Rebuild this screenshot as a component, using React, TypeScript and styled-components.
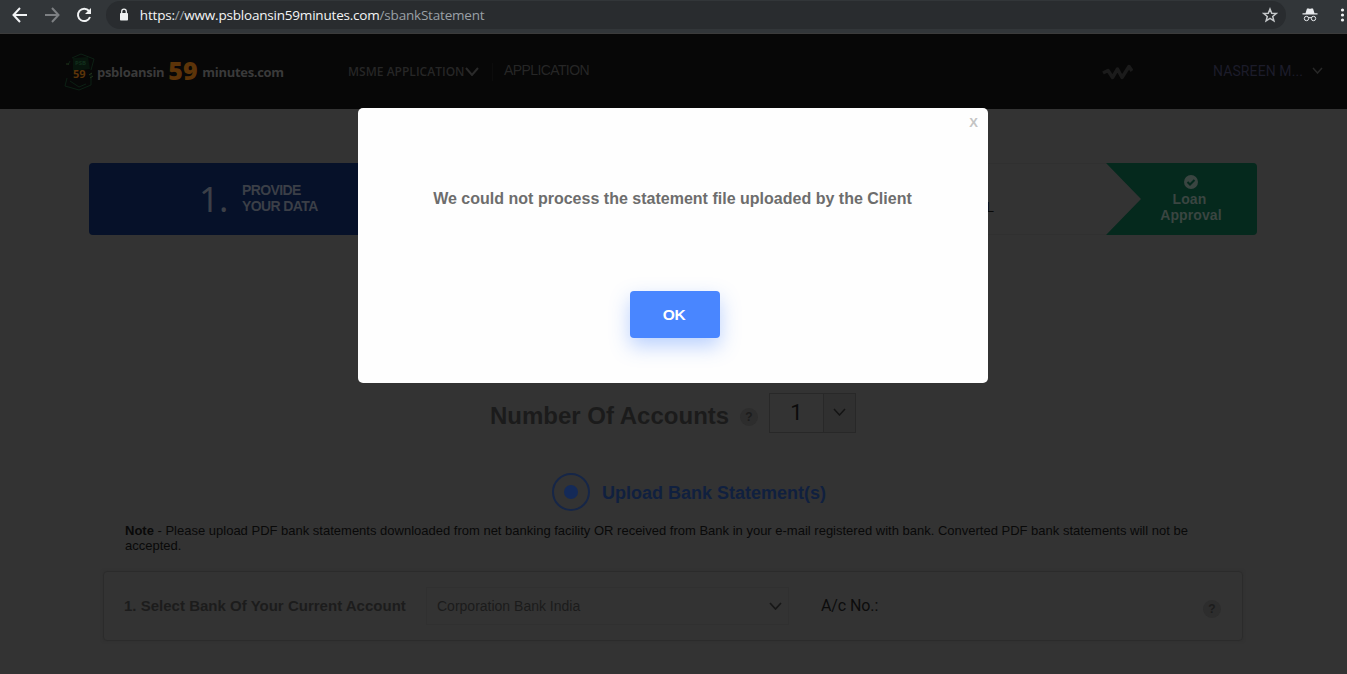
import React from 'react';
import styled, { createGlobalStyle } from 'styled-components';

const Global = createGlobalStyle`
  * { box-sizing: border-box; }
  body { margin: 0; background: #333; font-family: "Liberation Sans", Arial, sans-serif; overflow: hidden; }
  svg { display: block; flex: none; }
`;

const Screen = styled.div`
  position: relative;
  width: 1347px;
  height: 674px;
  overflow: hidden;
  background: #333333;
`;

const Toolbar = styled.div`
  display: flex;
  align-items: center;
  height: 34px;
  padding: 0 0 4px 12px;
  background: #323639;
  border-bottom: 1px solid #3b3b3b;
`;

const NavIcons = styled.div`
  display: flex;
  gap: 16px;
  width: 94px;
`;

const AddressBar = styled.div`
  display: flex;
  align-items: center;
  width: 1182px;
  height: 28px;
  padding: 0 8px 0 12px;
  border-radius: 14px;
  background: #292c2f;
`;

const Url = styled.div`
  flex: 1;
  margin-left: 10px;
  font: 13.5px/20px "Open Sans", "Noto Sans", sans-serif;
  letter-spacing: -0.2px;
  color: #f4f5f6;
  white-space: nowrap;
`;

const Faint = styled.span`
  color: #9aa0a6;
`;

const BrowserActions = styled.div`
  display: flex;
  align-items: center;
  gap: 15px;
  margin-left: 16px;
`;

const Header = styled.header`
  display: flex;
  align-items: center;
  height: 75px;
  padding: 0 24px 0 64px;
  background: #070707;
`;

const Logo = styled.div`
  display: flex;
  align-items: center;
  width: 284px;
`;

const LogoText = styled.span`
  font: 700 13px/18px "Open Sans", sans-serif;
  letter-spacing: -0.3px;
  color: #3a3a3a;
`;

const LogoNumber = styled.span`
  width: 38px;
  padding: 0 0 4px 4px;
  font: 800 25px/30px "Open Sans", sans-serif;
  color: #5c3409;
`;

const MenuItem = styled.div`
  display: flex;
  align-items: center;
  width: 145px;
  height: 18px;
  font: 600 12px/18px "Open Sans", sans-serif;
  letter-spacing: 0.02px;
  color: #262626;
  border-right: 1px solid #0c0c0c;
`;

const PlainLink = styled.div`
  flex: 1;
  margin: -3px 0 0 11px;
  font-size: 14px;
  letter-spacing: -0.6px;
  color: #262626;
`;

const User = styled.div`
  display: flex;
  align-items: center;
  justify-content: space-between;
  width: 110px;
  margin: -2px 0 0 80px;
  font: 14px/16px Roboto, sans-serif;
  letter-spacing: 0.1px;
  color: #1c1c2a;
`;

const Steps = styled.div`
  display: flex;
  width: 1168px;
  height: 72px;
  margin: 54px 0 0 89px;
  border-radius: 4px;
  overflow: hidden;
`;

const ActiveStep = styled.div`
  display: flex;
  align-items: center;
  width: 360px;
  padding-left: 110px;
  background: #061129;
  color: #3b3f47;
`;

const StepNumber = styled.div`
  width: 43px;
  font: 35px/40px "Noto Sans", sans-serif;
`;

const StepLabel = styled.div`
  margin-top: -2px;
  font: bold 14px/16px "Liberation Sans", sans-serif;
  letter-spacing: -0.6px;
`;

const PendingStep = styled.div`
  display: flex;
  flex: 1;
  align-items: center;
  justify-content: flex-end;
  padding: 15px 112px 0 0;
  border: solid #303030;
  border-width: 1px 0;
  font-size: 14px;
  color: #080808;
`;

const FinalStep = styled.div`
  display: flex;
  flex-direction: column;
  align-items: center;
  width: 151px;
  padding: 12px 0 0 19px;
  background: #05291d;
  clip-path: polygon(0 0, 100% 0, 100% 100%, 0 100%, 35px 50%);
  font: bold 14px/16px "Liberation Sans", sans-serif;
  letter-spacing: 0.1px;
  text-align: center;
  color: #3a4541;
`;

const FinalLabel = styled.div`
  margin: 2px 0 0;
`;

const FirstWord = styled.span`
  margin-right: 3px;
`;

const AccountsRow = styled.div`
  display: flex;
  align-items: center;
  height: 40px;
  margin: 158px 0 0 490px;
`;

const Title = styled.h1`
  width: 250px;
  margin: 5px 0 0;
  font-size: 24px;
  line-height: 28px;
  white-space: nowrap;
  color: #1b1b1b;
`;

const Help = styled.div<{ $top: number }>`
  width: 18px;
  height: 18px;
  margin-top: ${p => p.$top}px;
  border-radius: 50%;
  background: #2d2d2d;
  font: bold 12px/18px "Liberation Sans", sans-serif;
  text-align: center;
  color: #1c1c1c;
`;

const CountSelect = styled.div`
  display: flex;
  width: 87px;
  height: 40px;
  margin-left: 11px;
  border: 1px solid #282828;
`;

const CountValue = styled.div`
  width: 53px;
  font: 22px/38px Roboto, sans-serif;
  text-align: center;
  color: #0b0b0b;
`;

const CountArrow = styled.div`
  display: flex;
  flex: 1;
  align-items: center;
  justify-content: center;
  padding: 0 1px 2px 0;
  background: #303030;
  border-left: 1px solid #282828;
`;

const UploadRow = styled.div`
  display: flex;
  align-items: center;
  height: 38px;
  margin: 40px 0 0 552px;
  gap: 12px;
  font: bold 18px/22px "Liberation Sans", sans-serif;
  color: #10203f;
`;

const UploadLabel = styled.span`
  padding-top: 2px;
`;

const Radio = styled.div`
  display: flex;
  align-items: center;
  justify-content: center;
  width: 38px;
  height: 38px;
  border: 2px solid #162647;
  border-radius: 50%;
  &::after {
    content: "";
    width: 14px;
    height: 14px;
    border-radius: 50%;
    background: #142a58;
  }
`;

const Note = styled.p`
  width: 1100px;
  margin: 12px 0 0 125px;
  font-size: 13px;
  line-height: 15px;
  color: #090909;
  white-space: nowrap;
`;

const BankPanel = styled.section`
  display: flex;
  align-items: center;
  width: 1140px;
  height: 70px;
  margin: 18px 0 0 103px;
  padding: 0 21px 0 20px;
  border: 1px solid #2b2b2b;
  border-radius: 4px;
  box-shadow: 0 0 3px #2e2e2e;
`;

const BankLabel = styled.div`
  width: 302px;
  font: bold 15px/18px "Liberation Sans", sans-serif;
  letter-spacing: 0.01px;
  color: #1c1c1c;
`;

const BankSelect = styled.div`
  display: flex;
  align-items: center;
  justify-content: space-between;
  width: 363px;
  height: 38px;
  padding: 0 6px 0 10px;
  border: 1px solid #303030;
  font-size: 14px;
  color: #1b1b1b;
`;

const AccountNumber = styled.div`
  flex: 1;
  margin-left: 32px;
  font: 16px/18px Roboto, sans-serif;
  letter-spacing: -0.1px;
  color: #0c0c0c;
`;

const Dialog = styled.div`
  position: absolute;
  left: 358px;
  top: 108px;
  display: flex;
  flex-direction: column;
  align-items: center;
  width: 630px;
  height: 275px;
  padding-top: 7px;
  border-radius: 5px;
  background: #fefefe;
`;

const Close = styled.button`
  align-self: flex-end;
  margin-right: 10px;
  padding: 0;
  border: 0;
  background: none;
  font: bold 13px/16px "Liberation Sans", sans-serif;
  color: #c4c4c4;
`;

const Message = styled.p`
  margin: 59px 1px 0 0;
  font-weight: bold;
  font-size: 16px;
  line-height: 18px;
  letter-spacing: 0.01px;
  white-space: nowrap;
  color: #6d6d6d;
`;

const OkButton = styled.button`
  width: 90px;
  height: 47px;
  margin: 83px 0 0 4px;
  padding: 0 2px 0 0;
  border: 0;
  border-radius: 4px;
  background: #4986ff;
  box-shadow: 0 8px 20px rgba(73, 134, 255, 0.38);
  font: bold 15.5px/18px "Liberation Sans", sans-serif;
  letter-spacing: -0.3px;
  color: #fff;
`;

const Chevron = ({ w, h, color, stroke = 1.5 }: { w: number; h: number; color: string; stroke?: number }) => (
  <svg width={w} height={h} viewBox={`0 0 ${w} ${h}`} fill="none" stroke={color} strokeWidth={stroke}>
    <path d={`M1 1 L${w / 2} ${h - 1} L${w - 1} 1`} />
  </svg>
);

const CardsLogo = () => (
  <svg width="33" height="38" viewBox="0 0 33 38" fill="none">
    <path d="M8 5l9-4 13 5-3 11M3 25L1 33l14 4 12-5V20M6 8L4 12M6 28l9 6 7-3" stroke="#0c2014" />
    <path d="M9 5l15-1 2 12-17 2z" fill="#07150c" />
    <text x="11" y="12" fontFamily="Open Sans, sans-serif" fontWeight="700" fontSize="6" fill="#12301c">PSB</text>
    <text x="9" y="25" fontFamily="Open Sans, sans-serif" fontWeight="700" fontSize="11" fill="#5c3409">59</text>
    <path d="M2 11h3M25 22l3-2M26 25l3-2" stroke="#21351b" />
  </svg>
);

export default function App() {
  return (
    <Screen>
      <Global />
      <Toolbar>
        <NavIcons>
          <svg width="16" height="16" viewBox="0 0 16 16" fill="none" stroke="#f1f3f4" strokeWidth="2"><path d="M15 8H2M8 1L1.500 8L8 15" /></svg>
          <svg width="16" height="16" viewBox="0 0 16 16" fill="none" stroke="#7d8083" strokeWidth="2"><path d="M1 8h13M8 1l6.500 7L8 15" /></svg>
          <svg width="16" height="16" viewBox="0 0 16 16" fill="none"><path d="M13 4A6.200 6.200 0 1 0 14 10" stroke="#f1f3f4" strokeWidth="2" /><path d="M15 1v6H9z" fill="#f1f3f4" /></svg>
        </NavIcons>
        <AddressBar>
          <svg width="12" height="14" viewBox="0 0 12 14"><rect x="2" y="5" width="8" height="7.500" rx="0.800" fill="#eef0f1" /><path d="M3.700 6V3.500a2.300 2.300 0 0 1 4.600 0V6" fill="none" stroke="#eef0f1" strokeWidth="1.300" /></svg>
          <Url>https:<Faint>//</Faint>www.psbloansin59minutes.com<Faint>/sbankStatement</Faint></Url>
          <svg width="16" height="16" viewBox="0 0 16 16" fill="none" stroke="#c5c8ca" strokeWidth="1.500"><path d="M8 2l1.700 4.200 4.500.3-3.500 2.900 1.200 4.400L8 11.400l-3.900 2.400 1.200-4.400-3.500-2.900 4.500-.3z" /></svg>
        </AddressBar>
        <BrowserActions>
          <svg width="16" height="16" viewBox="0 0 16 16" fill="none"><path d="M.5 7.500h15v-1.200H12.500L11 1.500H9L8 2 7 1.500H5L3.500 6.300h-3z" fill="#e8eaed" /><circle cx="4.500" cy="11.500" r="2.200" stroke="#e8eaed" /><circle cx="11.500" cy="11.500" r="2.200" stroke="#e8eaed" /><path d="M6.500 11q1.500-1 3 0" stroke="#e8eaed" /></svg>
          <svg width="14" height="16" viewBox="0 0 14 16" fill="#f1f3f4"><circle cx="9.500" cy="3" r="1.600" /><circle cx="9.500" cy="8" r="1.600" /><circle cx="9.500" cy="13" r="1.600" /></svg>
        </BrowserActions>
      </Toolbar>

      <Header>
        <Logo>
          <CardsLogo />
          <LogoText>psbloansin</LogoText>
          <LogoNumber>59</LogoNumber>
          <LogoText>minutes.com</LogoText>
        </Logo>
        <MenuItem>MSME APPLICATION<Chevron w={14} h={9} color="#2a2a2a" stroke={2} /></MenuItem>
        <PlainLink>APPLICATION</PlainLink>
        <svg width="31" height="16" viewBox="0 0 31 16" fill="none" stroke="#1b1b1b" strokeWidth="3.500"><path d="M1 9l5-2.500 4.500 7 5-8.500 4.500 8.500 7-11 3 4.500" strokeLinejoin="round" /></svg>
        <User>NASREEN M...<Chevron w={11} h={7} color="#282828" /></User>
      </Header>

      <Steps>
        <ActiveStep>
          <StepNumber>1.</StepNumber>
          <StepLabel>PROVIDE<br />YOUR DATA</StepLabel>
        </ActiveStep>
        <PendingStep>L</PendingStep>
        <FinalStep>
          <svg width="14" height="14" viewBox="0 0 14 14"><circle cx="7" cy="7" r="7" fill="#3a4541" /><path d="M3.500 7l2.500 2.500 4.500-4.500" fill="none" stroke="#05291d" strokeWidth="2" /></svg>
          <FinalLabel><FirstWord>Loan</FirstWord><br />Approval</FinalLabel>
        </FinalStep>
      </Steps>

      <AccountsRow>
        <Title>Number Of Accounts</Title>
        <Help $top={8}>?</Help>
        <CountSelect>
          <CountValue>1</CountValue>
          <CountArrow><Chevron w={13} h={8} color="#141414" /></CountArrow>
        </CountSelect>
      </AccountsRow>

      <UploadRow><Radio /><UploadLabel>Upload Bank Statement(s)</UploadLabel></UploadRow>
      <Note>
        <b>Note</b> - Please upload PDF bank statements downloaded from net banking facility OR received from Bank in your e-mail registered with bank. Converted PDF bank statements will not be<br />accepted.
      </Note>

      <BankPanel>
        <BankLabel>1. Select Bank Of Your Current Account</BankLabel>
        <BankSelect>Corporation Bank India<Chevron w={13} h={8} color="#171717" stroke={1.7} /></BankSelect>
        <AccountNumber>A/c No.:</AccountNumber>
        <Help $top={6}>?</Help>
      </BankPanel>

      <Dialog role="dialog">
        <Close>X</Close>
        <Message>We could not process the statement file uploaded by the Client</Message>
        <OkButton>OK</OkButton>
      </Dialog>
    </Screen>
  );
}
